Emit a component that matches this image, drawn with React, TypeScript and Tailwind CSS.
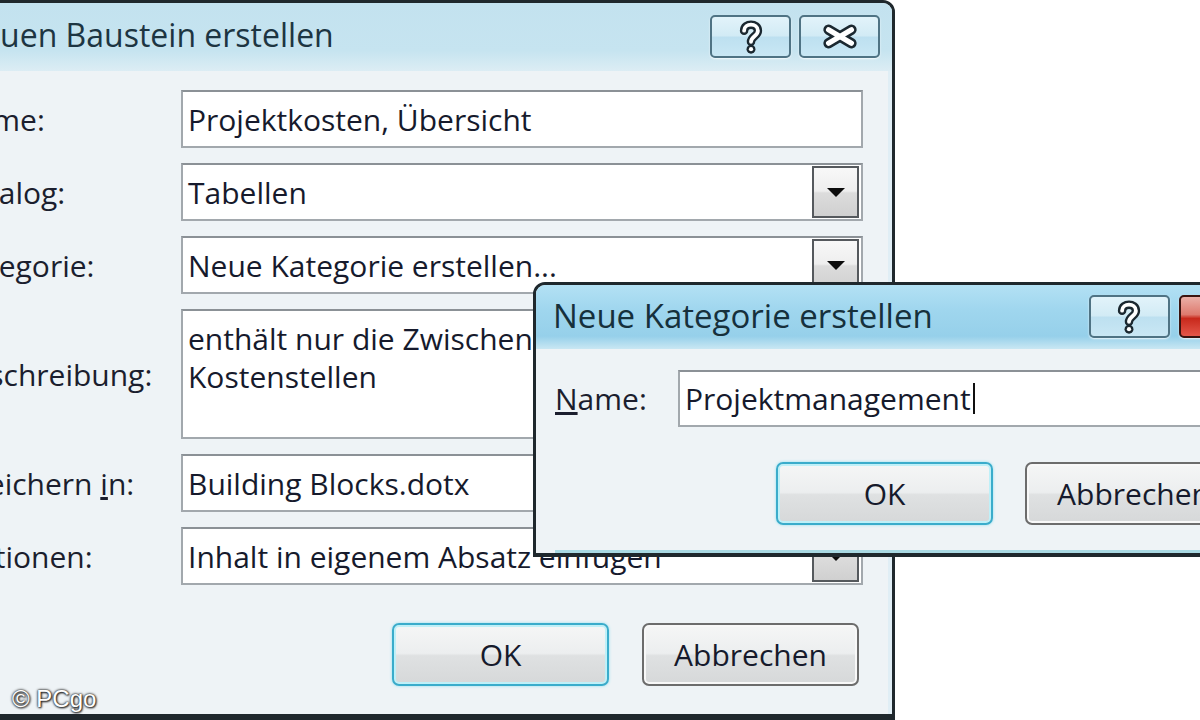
import React from "react";

const sans = "font-['Open_Sans','Noto_Sans',sans-serif] font-medium";

function HelpGlyph() {
  const d = "M-6.5 -6 C-6.5 -13.5 6.5 -13.5 6.5 -6 C6.5 -1 0 -0.5 0 4.5";
  return (
    <svg width="26" height="34" viewBox="-12 -16 24 32">
      <g fill="none" strokeLinecap="round" strokeLinejoin="round">
        <path d={d} stroke="#1b2830" strokeWidth="8" />
        <circle cx="0" cy="11.5" r="4.2" fill="#1b2830" />
        <path d={d} stroke="#ffffff" strokeWidth="3.6" />
        <circle cx="0" cy="11.5" r="2" fill="#ffffff" />
      </g>
    </svg>
  );
}

function CloseGlyph() {
  const d = "M-11 -6.5 L11 6.5 M-11 6.5 L11 -6.5";
  return (
    <svg width="38" height="27" viewBox="-18 -13 36 26">
      <path d={d} stroke="#1b2830" strokeWidth="10" strokeLinecap="round" fill="none" />
      <path d={d} stroke="#ffffff" strokeWidth="5" strokeLinecap="round" fill="none" />
    </svg>
  );
}

function CaptionButton({ kind, red }: { kind: "help" | "close"; red?: boolean }) {
  const skin = red
    ? "border-[#3a1410] bg-[linear-gradient(to_bottom,#eab0a8_0%,#de7a6e_45%,#c8291c_55%,#e4574a_100%)]"
    : "border-[#4f7384] bg-[linear-gradient(to_bottom,#e2f3fa_0%,#d2ebf5_48%,#bde0f0_52%,#c9e7f4_100%)]";
  return (
    <div
      className={`w-[81px] h-[43px] rounded-[5px] border-2 ${skin} flex items-center justify-center shadow-[0_1px_2px_rgba(255,255,255,0.8)]`}
    >
      {kind === "help" ? <HelpGlyph /> : <CloseGlyph />}
    </div>
  );
}

function DropArrow() {
  return (
    <svg width="20" height="11" viewBox="0 0 20 11">
      <path d="M1 1 L19 1 L10 10 Z" fill="#0c0c0c" />
    </svg>
  );
}

function TextField({ value, h = "h-[58px]" }: { value: string; h?: string }) {
  return (
    <div className={`${h} flex items-center bg-white border-2 border-[#a2a8ad] border-t-[#8b9196] pl-[5px] text-[30px] text-[#161a2c] whitespace-nowrap overflow-hidden`}>
      {value}
    </div>
  );
}

function ComboField({ value }: { value: string }) {
  return (
    <div className="h-[58px] flex items-stretch bg-white border-2 border-[#a2a8ad] border-t-[#8b9196]">
      <div className="flex-1 flex items-center pl-[5px] text-[30px] text-[#161a2c] whitespace-nowrap overflow-hidden">
        {value}
      </div>
      <div className="w-[47px] my-[1px] mr-[2px] border-2 border-[#55595d] bg-[linear-gradient(to_bottom,#f8f8f8_0%,#eeeeee_48%,#dcdcdc_52%,#d0d0d0_100%)] flex items-center justify-center">
        <DropArrow />
      </div>
    </div>
  );
}

function PushButton({ label, primary }: { label: string; primary?: boolean }) {
  const skin = primary
    ? "border-[#3aaccb] shadow-[0_0_3px_#8fe0f0,inset_0_0_0_2px_#bff0f8]"
    : "border-[#6c6c6c] shadow-[inset_0_0_0_2px_#f8f8f8]";
  return (
    <div
      className={`w-[217px] h-[63px] rounded-[7px] border-2 ${skin} bg-[linear-gradient(to_bottom,#f5f6f6_0%,#eceeef_48%,#dfe1e2_52%,#d6d8d9_100%)] flex items-center justify-center text-[30px] text-[#161a2c]`}
    >
      {label}
    </div>
  );
}

function Label({ children }: { children: React.ReactNode }) {
  return <div className="text-[30px] text-[#1b1e2e] whitespace-nowrap">{children}</div>;
}

function BuildingBlockDialog() {
  return (
    <div className="absolute left-[-60px] top-0 w-[955px] h-[720px] flex flex-col rounded-t-[12px] border-[3px] border-b-[6px] border-[#1f282d] bg-[#eef3f6] overflow-hidden">
      <div className="h-[68px] shrink-0 flex pl-[15px] pr-[12px] bg-[linear-gradient(to_bottom,#c3e2ef_0%,#c6e4f0_70%,#dcedf4_100%)]">
        <span className="self-center mb-[4px] text-[32px] text-[#1d3542] whitespace-nowrap">
          Neuen Baustein erstellen
        </span>
        <div className="ml-auto mt-[12px] flex gap-[8px]">
          <CaptionButton kind="help" />
          <CaptionButton kind="close" />
        </div>
      </div>
      <div className="flex-1 flex flex-col pl-[10px] pr-[25px] pt-[19px] border-r-[4px] border-r-[#e0eef5]">
        <div className="grid grid-cols-[228px_1fr] gap-y-[15px] items-center">
          <Label>Name:</Label>
          <TextField value="Projektkosten, Übersicht" />
          <Label>Katalog:</Label>
          <ComboField value="Tabellen" />
          <Label>Kategorie:</Label>
          <ComboField value="Neue Kategorie erstellen..." />
          <Label>Beschreibung:</Label>
          <div className="h-[130px] bg-white border-2 border-[#a2a8ad] border-t-[#8b9196] pl-[5px] pt-[9px] text-[30px] leading-[38px] text-[#161a2c] whitespace-nowrap overflow-hidden">
            <div>enthält nur die Zwischensummen der</div>
            <div>Kostenstellen</div>
          </div>
          <Label>
            Speichern <u>i</u>n:
          </Label>
          <TextField value="Building Blocks.dotx" />
          <Label>Optionen:</Label>
          <ComboField value="Inhalt in eigenem Absatz einfügen" />
        </div>
        <div className="flex justify-end gap-[33px] pr-[4px] mt-[38px]">
          <PushButton label="OK" primary />
          <PushButton label="Abbrechen" />
        </div>
      </div>
    </div>
  );
}

function NewCategoryDialog() {
  return (
    <div className="absolute left-[533px] top-[282px] w-[720px] h-[275px] flex flex-col rounded-tl-[12px] border-[3px] border-b-[4px] border-[#1f282d] bg-[#eef3f6] overflow-hidden">
      <div className="h-[64px] shrink-0 flex pl-[17px] bg-[linear-gradient(to_bottom,#b3e1f4_0%,#9fd6ee_40%,#96d0ea_80%,#c9e7f3_100%)]">
        <span className="w-[380px] self-center mb-[2px] text-[33px] text-[#16303c] whitespace-nowrap">
          Neue Kategorie erstellen
        </span>
        <div className="ml-[156px] mt-[10px] flex gap-[9px]">
          <CaptionButton kind="help" />
          <CaptionButton kind="close" red />
        </div>
      </div>
      <div className="flex-1 flex flex-col pl-[19px] pt-[21px]">
        <div className="flex items-center">
          <div className="w-[123px] text-[30px] text-[#1b1e2e]">
            <u>N</u>ame:
          </div>
          <div className="flex-1 h-[57px] flex items-center bg-white border-2 border-[#a2a8ad] border-t-[#8b9196] pl-[5px] text-[30px] text-[#161a2c] whitespace-nowrap">
            Projektmanagement
            <span className="inline-block w-[2px] h-[31px] bg-[#101010] ml-[2px]" />
          </div>
        </div>
        <div className="flex gap-[32px] ml-[221px] mt-[35px]">
          <PushButton label="OK" primary />
          <PushButton label="Abbrechen" />
        </div>
        <div className="mt-auto h-[3px] bg-[#a9d9e3]" />
      </div>
    </div>
  );
}

export default function App() {
  return (
    <div className={`relative w-[1200px] h-[720px] overflow-hidden bg-white ${sans}`}>
      <BuildingBlockDialog />
      <NewCategoryDialog />
      <div className="absolute left-[12px] top-[681px] font-['Liberation_Sans',Arial,sans-serif] font-normal text-[24px] text-white [text-shadow:0_0_2px_#222,0_0_3px_#333,1px_1px_2px_#222]">
        © PCgo
      </div>
    </div>
  );
}
